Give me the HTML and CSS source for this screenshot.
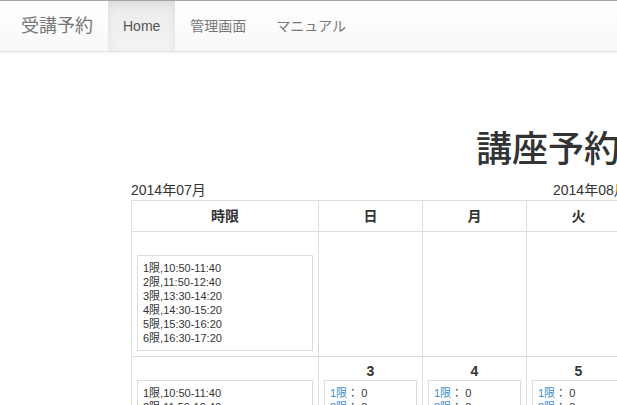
FILE: index.html
```html
<!DOCTYPE html>
<html lang="ja">
<head>
<meta charset="utf-8">
<title>受講予約</title>
<link rel="stylesheet" href="styles.css">
</head>
<body>
<nav class="navbar">
  <a class="brand" href="#">受講予約</a>
  <ul class="nav">
    <li class="active"><a href="#">Home</a></li>
    <li><a href="#">管理画面</a></li>
    <li><a href="#">マニュアル</a></li>
  </ul>
</nav>
<main class="page">
  <div class="content">
    <h1 class="title">講座予約</h1>
    <div class="months">
      <span>2014年07月</span>
      <span>2014年08月</span>
    </div>
    <table class="cal">
      <colgroup>
        <col class="c-time">
        <col class="c-day"><col class="c-day"><col class="c-day"><col class="c-day"><col class="c-day"><col class="c-day"><col class="c-day">
      </colgroup>
      <thead>
        <tr><th>時限</th><th>日</th><th>月</th><th>火</th><th>水</th><th>木</th><th>金</th><th>土</th></tr>
      </thead>
      <tbody>
        <tr>
          <td>
            <div class="daynum"></div>
            <div class="box">
              <div>1限,10:50-11:40</div><div>2限,11:50-12:40</div><div>3限,13:30-14:20</div><div>4限,14:30-15:20</div><div>5限,15:30-16:20</div><div>6限,16:30-17:20</div>
            </div>
          </td>
          <td></td><td></td><td></td><td></td><td></td>
          <td>
            <div class="daynum">1</div>
            <div class="box">
              <div><a href="#">1限</a>： 0</div><div><a href="#">2限</a>： 0</div><div><a href="#">3限</a>： 0</div><div><a href="#">4限</a>： 0</div><div><a href="#">5限</a>： 0</div><div><a href="#">6限</a>： 0</div>
            </div>
          </td>
          <td>
            <div class="daynum">2</div>
            <div class="box">
              <div><a href="#">1限</a>： 0</div><div><a href="#">2限</a>： 0</div><div><a href="#">3限</a>： 0</div><div><a href="#">4限</a>： 0</div><div><a href="#">5限</a>： 0</div><div><a href="#">6限</a>： 0</div>
            </div>
          </td>
        </tr>
        <tr>
          <td>
            <div class="daynum"></div>
            <div class="box">
              <div>1限,10:50-11:40</div><div>2限,11:50-12:40</div><div>3限,13:30-14:20</div><div>4限,14:30-15:20</div><div>5限,15:30-16:20</div><div>6限,16:30-17:20</div>
            </div>
          </td>
          <td>
            <div class="daynum">3</div>
            <div class="box">
              <div><a href="#">1限</a>： 0</div><div><a href="#">2限</a>： 0</div><div><a href="#">3限</a>： 0</div><div><a href="#">4限</a>： 0</div><div><a href="#">5限</a>： 0</div><div><a href="#">6限</a>： 0</div>
            </div>
          </td>
          <td>
            <div class="daynum">4</div>
            <div class="box">
              <div><a href="#">1限</a>： 0</div><div><a href="#">2限</a>： 0</div><div><a href="#">3限</a>： 0</div><div><a href="#">4限</a>： 0</div><div><a href="#">5限</a>： 0</div><div><a href="#">6限</a>： 0</div>
            </div>
          </td>
          <td>
            <div class="daynum">5</div>
            <div class="box">
              <div><a href="#">1限</a>： 0</div><div><a href="#">2限</a>： 0</div><div><a href="#">3限</a>： 0</div><div><a href="#">4限</a>： 0</div><div><a href="#">5限</a>： 0</div><div><a href="#">6限</a>： 0</div>
            </div>
          </td>
          <td>
            <div class="daynum">6</div>
            <div class="box">
              <div><a href="#">1限</a>： 0</div><div><a href="#">2限</a>： 0</div><div><a href="#">3限</a>： 0</div><div><a href="#">4限</a>： 0</div><div><a href="#">5限</a>： 0</div><div><a href="#">6限</a>： 0</div>
            </div>
          </td>
          <td>
            <div class="daynum">7</div>
            <div class="box">
              <div><a href="#">1限</a>： 0</div><div><a href="#">2限</a>： 0</div><div><a href="#">3限</a>： 0</div><div><a href="#">4限</a>： 0</div><div><a href="#">5限</a>： 0</div><div><a href="#">6限</a>： 0</div>
            </div>
          </td>
          <td>
            <div class="daynum">8</div>
            <div class="box">
              <div><a href="#">1限</a>： 0</div><div><a href="#">2限</a>： 0</div><div><a href="#">3限</a>： 0</div><div><a href="#">4限</a>： 0</div><div><a href="#">5限</a>： 0</div><div><a href="#">6限</a>： 0</div>
            </div>
          </td>
          <td>
            <div class="daynum">9</div>
            <div class="box">
              <div><a href="#">1限</a>： 0</div><div><a href="#">2限</a>： 0</div><div><a href="#">3限</a>： 0</div><div><a href="#">4限</a>： 0</div><div><a href="#">5限</a>： 0</div><div><a href="#">6限</a>： 0</div>
            </div>
          </td>
        </tr>
      </tbody>
    </table>
  </div>
</main>
</body>
</html>
```
FILE: styles.css
```css
html {
  overflow: hidden;
}
body {
  margin: 0;
  font-family: "Liberation Sans", "Noto Sans CJK JP", sans-serif;
  font-size: 14px;
  line-height: 20px;
  color: #333;
  background: #fff;
}
a {
  color: #428bca;
  text-decoration: none;
}
.navbar {
  display: flex;
  align-items: stretch;
  height: 50px;
  padding-left: 6px;
  border-top: 1px solid #a3a3a3;
  border-bottom: 1px solid #e2e2e2;
  background: linear-gradient(to bottom, #ffffff 0, #f8f8f8 100%);
  box-shadow: 0 1px 4px rgba(0, 0, 0, 0.05);
}
.brand {
  padding: 15px;
  font-size: 18px;
  line-height: 20px;
  color: #777;
}
.nav {
  display: flex;
  margin: 0;
  padding: 0;
  list-style: none;
}
.nav a {
  display: block;
  padding: 15px;
  line-height: 20px;
  color: #777;
}
.nav .active a {
  color: #555;
  background: linear-gradient(to bottom, #ebebeb 0, #f3f3f3 100%);
  box-shadow: inset 0 3px 9px rgba(0, 0, 0, 0.075);
}
.page {
  padding-left: 131px;
  padding-top: 78px;
}
.content {
  width: 834px;
}
.title {
  margin: 0 0 10px;
  font-size: 36px;
  font-weight: 500;
  line-height: 40px;
  text-align: center;
}
.months {
  display: grid;
  grid-template-columns: 422px auto;
  white-space: nowrap;
}
.cal {
  table-layout: fixed;
  border-collapse: collapse;
  width: 915px;
}
.c-time {
  width: 187px;
}
.c-day {
  width: 104px;
}
.cal th,
.cal td {
  border: 1px solid #ddd;
  padding: 5px;
  vertical-align: top;
}
.cal th {
  text-align: center;
  font-weight: bold;
  line-height: 20px;
}
.daynum {
  height: 18px;
  line-height: 18px;
  text-align: center;
  font-weight: bold;
  font-size: 14px;
}
.box {
  border: 1px solid #ddd;
  padding: 5px;
  font-size: 11px;
  line-height: 14px;
  white-space: nowrap;
}
```
